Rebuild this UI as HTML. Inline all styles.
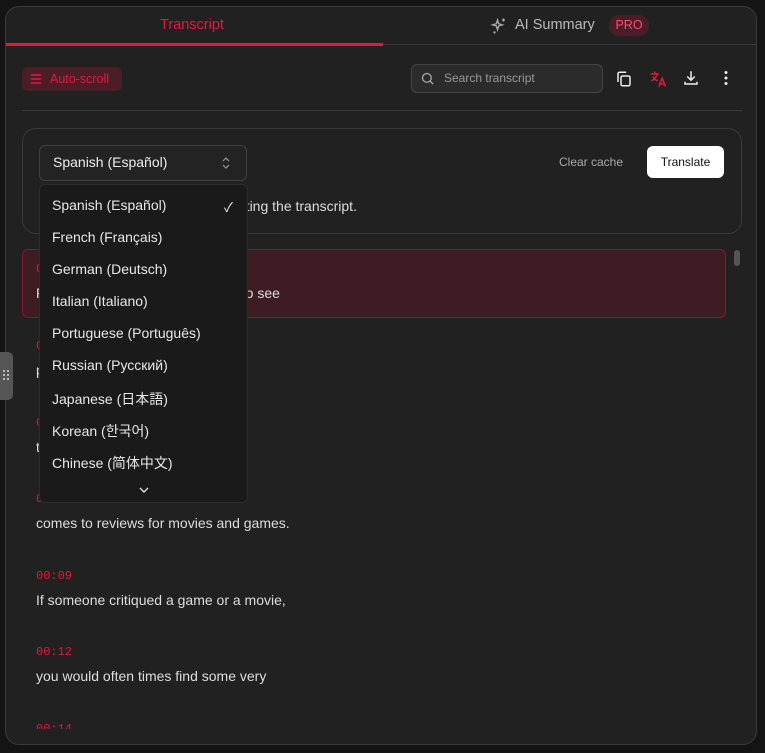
<!DOCTYPE html>
<html><head><meta charset="utf-8"><style>
*{box-sizing:border-box;margin:0;padding:0}
body{width:765px;height:753px;background:#141414;font-family:"Liberation Sans","Noto Sans CJK JP",sans-serif;position:relative;overflow:hidden;color:#e5e5e5}
.a{position:absolute}
.panel{left:5px;top:6px;width:752px;height:739px;background:#212121;border:1px solid #3a3a3a;border-radius:14px;overflow:hidden}
.ts{font-family:"Liberation Mono",monospace;font-size:12px;color:#e8163c}
.tx{font-size:14px;color:#ddd;white-space:nowrap}
.item{position:absolute;left:12px;font-size:14px;color:#e8e8e8;white-space:nowrap}
</style></head><body>
<div class="a panel">
  <div class="a" style="left:0;top:0;width:752px;height:38px;border-bottom:1px solid #3a3a3a"></div>
  <div class="a" style="left:0;top:36px;width:377px;height:3px;background:#e8163c"></div>
  <div class="a" style="left:154px;top:10px;font-size:14.5px;color:#e8163c">Transcript</div>
  <svg class="a" style="left:484px;top:10px" width="18" height="18" viewBox="0 0 24 24" fill="none" stroke="#aaa" stroke-width="1.8"><path d="M10 4l1.5 5 5 1.5-5 1.5L10 17l-1.5-5-5-1.5 5-1.5z"/><path d="M18 2v4M16 4h4M6 19v3M4.5 20.5h3"/></svg>
  <div class="a" style="left:509px;top:10px;font-size:14.5px;color:#bbb">AI Summary</div>
  <div class="a" style="left:603px;top:8px;width:40px;height:21px;border-radius:10px;background:#4a1d27;color:#ff4d6d;font-size:12.5px;text-align:center;line-height:21px">PRO</div>

  <div class="a" style="left:16px;top:60px;width:100px;height:24px;border-radius:5px;background:#4a1d27;color:#e8163c;font-size:12.5px;line-height:24px;padding-left:28px">Auto-scroll</div>
  <svg class="a" style="left:24px;top:66px" width="12" height="12" viewBox="0 0 12 12" stroke="#e8163c" stroke-width="1.6"><path d="M1 2h10M1 6h10M1 10h10"/></svg>
  <div class="a" style="left:405px;top:57px;width:192px;height:29px;border:1px solid #444;border-radius:6px;background:#2b2b2b"></div>
  <svg class="a" style="left:414px;top:64px" width="15" height="15" viewBox="0 0 24 24" fill="none" stroke="#aaa" stroke-width="2"><circle cx="11" cy="11" r="7"/><path d="M16 16l5 5"/></svg>
  <div class="a" style="left:438px;top:64px;font-size:12px;color:#999">Search transcript</div>
  <svg class="a" style="left:609px;top:63px" width="18" height="18" viewBox="0 0 24 24" fill="none" stroke="#eee" stroke-width="2"><rect x="8" y="8" width="12" height="13" rx="2"/><path d="M4 16V5a2 2 0 012-2h9"/></svg>
  <svg class="a" style="left:642px;top:62px" width="20" height="20" viewBox="0 0 24 24" fill="none" stroke="#e8163c" stroke-width="1.8"><path d="M3 6h10M8 3v3M11 6c-1 4-4 7-7 8M6 9c1 3 4 5 6 5M13 21l4-10 4 10M14.5 18h5"/></svg>
  <svg class="a" style="left:676px;top:62px" width="18" height="18" viewBox="0 0 24 24" fill="none" stroke="#eee" stroke-width="2"><path d="M12 3v12M7 10l5 5 5-5M4 17v3h16v-3"/></svg>
  <svg class="a" style="left:712px;top:63px" width="16" height="16" viewBox="0 0 16 16" fill="#eee"><circle cx="8" cy="2.5" r="1.5"/><circle cx="8" cy="8" r="1.5"/><circle cx="8" cy="13.5" r="1.5"/></svg>
  <div class="a" style="left:16px;top:103px;width:720px;height:1px;background:#3a3a3a"></div>

  <div class="a" style="left:16px;top:121px;width:720px;height:106px;border:1px solid #3a3a3a;border-radius:14px"></div>
  <div class="a" style="left:33px;top:138px;width:208px;height:36px;border:1px solid #3f3f3f;border-radius:6px;background:#232323"></div>
  <div class="a" style="left:47px;top:147px;font-size:14px;color:#eee">Spanish (Español)</div>
  <svg class="a" style="left:215px;top:149px" width="10" height="14" viewBox="0 0 10 14" fill="none" stroke="#999" stroke-width="1.2"><path d="M2 5l3-3 3 3M2 9l3 3 3-3"/></svg>
  <div class="a" style="left:553px;top:148px;font-size:12px;color:#aaa">Clear cache</div>
  <div class="a" style="left:641px;top:139px;width:77px;height:32px;border-radius:6px;background:#fff;color:#111;font-size:12px;text-align:center;line-height:32px">Translate</div>
  <div class="a tx" style="left:35px;top:191px">Select a language to start translating the transcript.</div>

  <div class="a" style="left:0;top:236px;width:752px;height:486px;overflow:hidden">
    <div class="a" style="left:16px;top:6px;width:704px;height:69px;border:1px solid #8a1530;border-radius:6px;background:#3d1d23"></div>
    <div class="a ts" style="left:30px;top:19px">00:00</div>
    <div class="a tx" style="left:30px;top:42px">For years I've been fascinated in to see</div>
    <div class="a ts" style="left:30px;top:96px">00:03</div>
    <div class="a tx" style="left:30px;top:119px">people make the same argument</div>
    <div class="a ts" style="left:30px;top:173px">00:05</div>
    <div class="a tx" style="left:30px;top:196px">that I keep hearing when it</div>
    <div class="a ts" style="left:30px;top:249px">00:07</div>
    <div class="a tx" style="left:30px;top:272px">comes to reviews for movies and games.</div>
    <div class="a ts" style="left:30px;top:326px">00:09</div>
    <div class="a tx" style="left:30px;top:349px">If someone critiqued a game or a movie,</div>
    <div class="a ts" style="left:30px;top:402px">00:12</div>
    <div class="a tx" style="left:30px;top:425px">you would often times find some very</div>
    <div class="a ts" style="left:30px;top:479px">00:14</div>
  </div>
  <div class="a" style="left:728px;top:243px;width:6px;height:16px;border-radius:3px;background:#555"></div>
</div>
<div class="a" style="left:0;top:352px;width:13px;height:48px;border-radius:0 5px 5px 0;background:#555"></div>
<svg class="a" style="left:2px;top:369px" width="8" height="12" viewBox="0 0 8 12" fill="#ddd"><circle cx="2" cy="2" r="1"/><circle cx="6" cy="2" r="1"/><circle cx="2" cy="6" r="1"/><circle cx="6" cy="6" r="1"/><circle cx="2" cy="10" r="1"/><circle cx="6" cy="10" r="1"/></svg>

<div class="a" style="left:39px;top:184px;width:209px;height:319px;background:#1a1a1a;border:1px solid #2c2c2c;border-radius:6px">
  <div class="item" style="top:12px">Spanish (Español)</div>
  <div class="a" style="left:184px;top:12px;font-size:13px;color:#eee">✓</div>
  <div class="item" style="top:44px">French (Français)</div>
  <div class="item" style="top:76px">German (Deutsch)</div>
  <div class="item" style="top:108px">Italian (Italiano)</div>
  <div class="item" style="top:140px">Portuguese (Português)</div>
  <div class="item" style="top:172px">Russian (Русский)</div>
  <div class="item" style="top:204px">Japanese (日本語)</div>
  <div class="item" style="top:236px">Korean (한국어)</div>
  <div class="item" style="top:268px">Chinese (简体中文)</div>
  <svg class="a" style="left:99px;top:302px" width="10" height="7" viewBox="0 0 10 7" fill="none" stroke="#ddd" stroke-width="1.4"><path d="M1 1l4 4 4-4"/></svg>
</div>
</body></html>
